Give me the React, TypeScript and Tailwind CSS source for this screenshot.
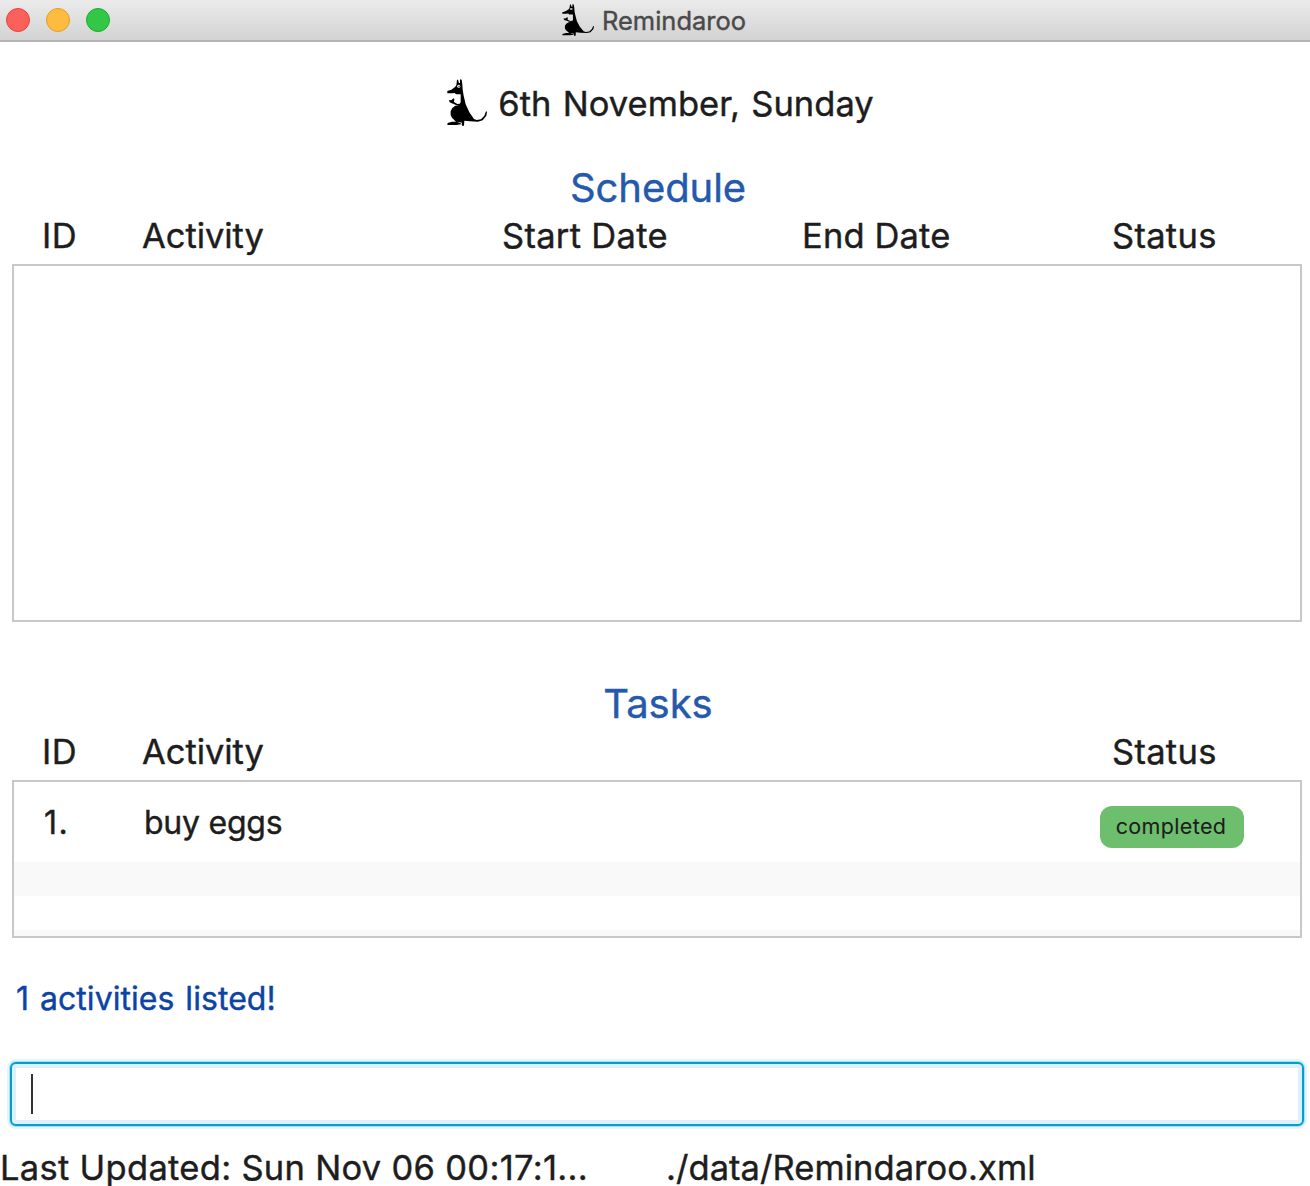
import React from "react";

function Kangaroo({ className }: { className: string }) {
  return (
    <svg viewBox="21 10 120 141" preserveAspectRatio="none" className={className} aria-hidden="true">
      <path
        d="M51 12 L54 12 L57 22 L60 22 L60 11 L65 12 L67 26 L68 42 L71 60 L77 86 L88 110 L102 130 L110 133 L123 131 L133 120 L138 107 L141 108 L139 120 L128 134 L114 138 L90 137 L73 135 L72 150 L66 150 L66 141 L51 138 L66 145 L50 148 L22 148 L23 142 L36 138 L48 138 L36 126 L32 118 L32 106 L37 97 L46 90 L57 88 L62 80 L62 56 L48 56 L44 52 L37 53 L22 53 L22 46 L34 42 L45 34 L49 29 Z"
        fill="#000"
      />
      <path d="M27 73 L34 74 L40 68 L43 70 L42 79 L52 85 L60 84 L60 89 L48 88 L39 84 L29 80 Z" fill="#000" />
      <circle cx="56" cy="32" r="4.5" fill="#fff" />
      <circle cx="57" cy="32" r="2" fill="#000" />
    </svg>
  );
}

const heading =
  "flex h-10 items-center justify-center pl-1.5 text-[40px] leading-10 tracking-[-0.05px] text-[#2459ab]";
const header = "mt-2 flex h-10 items-center pl-[42px] text-[34.5px] leading-10";
const panel = "mt-2 ml-3 mr-2 border-2 border-[#c8c8c8] bg-white";

export default function App() {
  return (
    <div className="h-[1186px] w-[1310px] overflow-hidden bg-white font-['Inter',sans-serif] whitespace-nowrap text-[#1d1d1d] [-webkit-text-stroke:0.4px]">
      <div className="relative flex h-[42px] items-center justify-center border-b-2 border-[#b4b4b4] bg-linear-to-b from-[#ebebeb] to-[#d3d3d3]">
        <div className="absolute top-2 left-1.5 flex gap-4">
          <span className="size-6 rounded-full border border-[#e2463f] bg-[#fc605b]" />
          <span className="size-6 rounded-full border border-[#dfa023] bg-[#fdbc40]" />
          <span className="size-6 rounded-full border border-[#1dad2b] bg-[#33c748]" />
        </div>
        <Kangaroo className="-mt-px -ml-0.5 h-8 w-8" />
        <span className="mt-0.5 ml-2 text-[25.5px] leading-10 text-[#4a4a4a]">Remindaroo</span>
      </div>

      <div className="mt-[30px] flex h-[62px] items-center justify-center pl-[11px]">
        <Kangaroo className="-mt-px h-[47px] w-10" />
        <span className="mt-0.5 ml-[11px] text-[34.5px] leading-10 tracking-[0.02px] [word-spacing:1.6px]">
          6th November, Sunday
        </span>
      </div>

      <section className="mt-[34px]">
        <h2 className={heading}>Schedule</h2>
        <div className={header}>
          <span className="w-[100px] tracking-[0.5px]">ID</span>
          <span className="w-[360px] tracking-[-0.05px]">Activity</span>
          <span className="w-[300px] tracking-[0.3px]">Start Date</span>
          <span className="w-[310px] tracking-[0.15px]">End Date</span>
          <span className="tracking-[0.3px]">Status</span>
        </div>
        <div className={`${panel} h-[358px]`} />
      </section>

      <section className="mt-[62px]">
        <h2 className={heading}>Tasks</h2>
        <div className={header}>
          <span className="w-[100px] tracking-[0.5px]">ID</span>
          <span className="w-[970px] tracking-[-0.05px]">Activity</span>
          <span className="tracking-[0.3px]">Status</span>
        </div>
        <div className={`${panel} h-[158px]`}>
          <div className="flex h-20 text-[32px] leading-[82px]">
            <span className="w-[100px] pl-[30px] tracking-[1.5px]">1.</span>
            <span className="ml-[30px] w-[956px] tracking-[-0.25px]">buy eggs</span>
            <span className="mt-6 h-[42px] w-36 rounded-xl bg-[#6dbf6d] pr-0.5 text-center text-[21.5px] leading-[41px] tracking-[0.35px] [-webkit-text-stroke:0.1px]">
              completed
            </span>
          </div>
          <div className="h-[34px] bg-[#f9f9f9]" />
          <div className="h-[34px]" />
          <div className="h-1.5 bg-[#f9f9f9]" />
        </div>
      </section>

      <p className="mt-[41px] pl-4 text-[32px] leading-10 tracking-[0.06px] text-[#0b44a5] [word-spacing:1.8px]">
        1 activities listed!
      </p>

      <div className="mt-[43px] mr-1.5 ml-2.5 flex h-16 items-center rounded-[6px] border-2 border-[#039ed3] bg-white pl-[19px] shadow-[0_0_0_1px_#a5dff1,0_0_0_3px_#e4f6fc,inset_0_0_0_4px_#dcf1f9]">
        <span className="h-10 w-0.5 bg-[#333]" />
      </div>

      <footer className="mt-6 flex text-[34.5px] leading-9">
        <span className="w-[666px] tracking-[0.3px]">Last Updated: Sun Nov 06 00:17:1...</span>
        <span className="tracking-[0.05px]">./data/Remindaroo.xml</span>
      </footer>
    </div>
  );
}
